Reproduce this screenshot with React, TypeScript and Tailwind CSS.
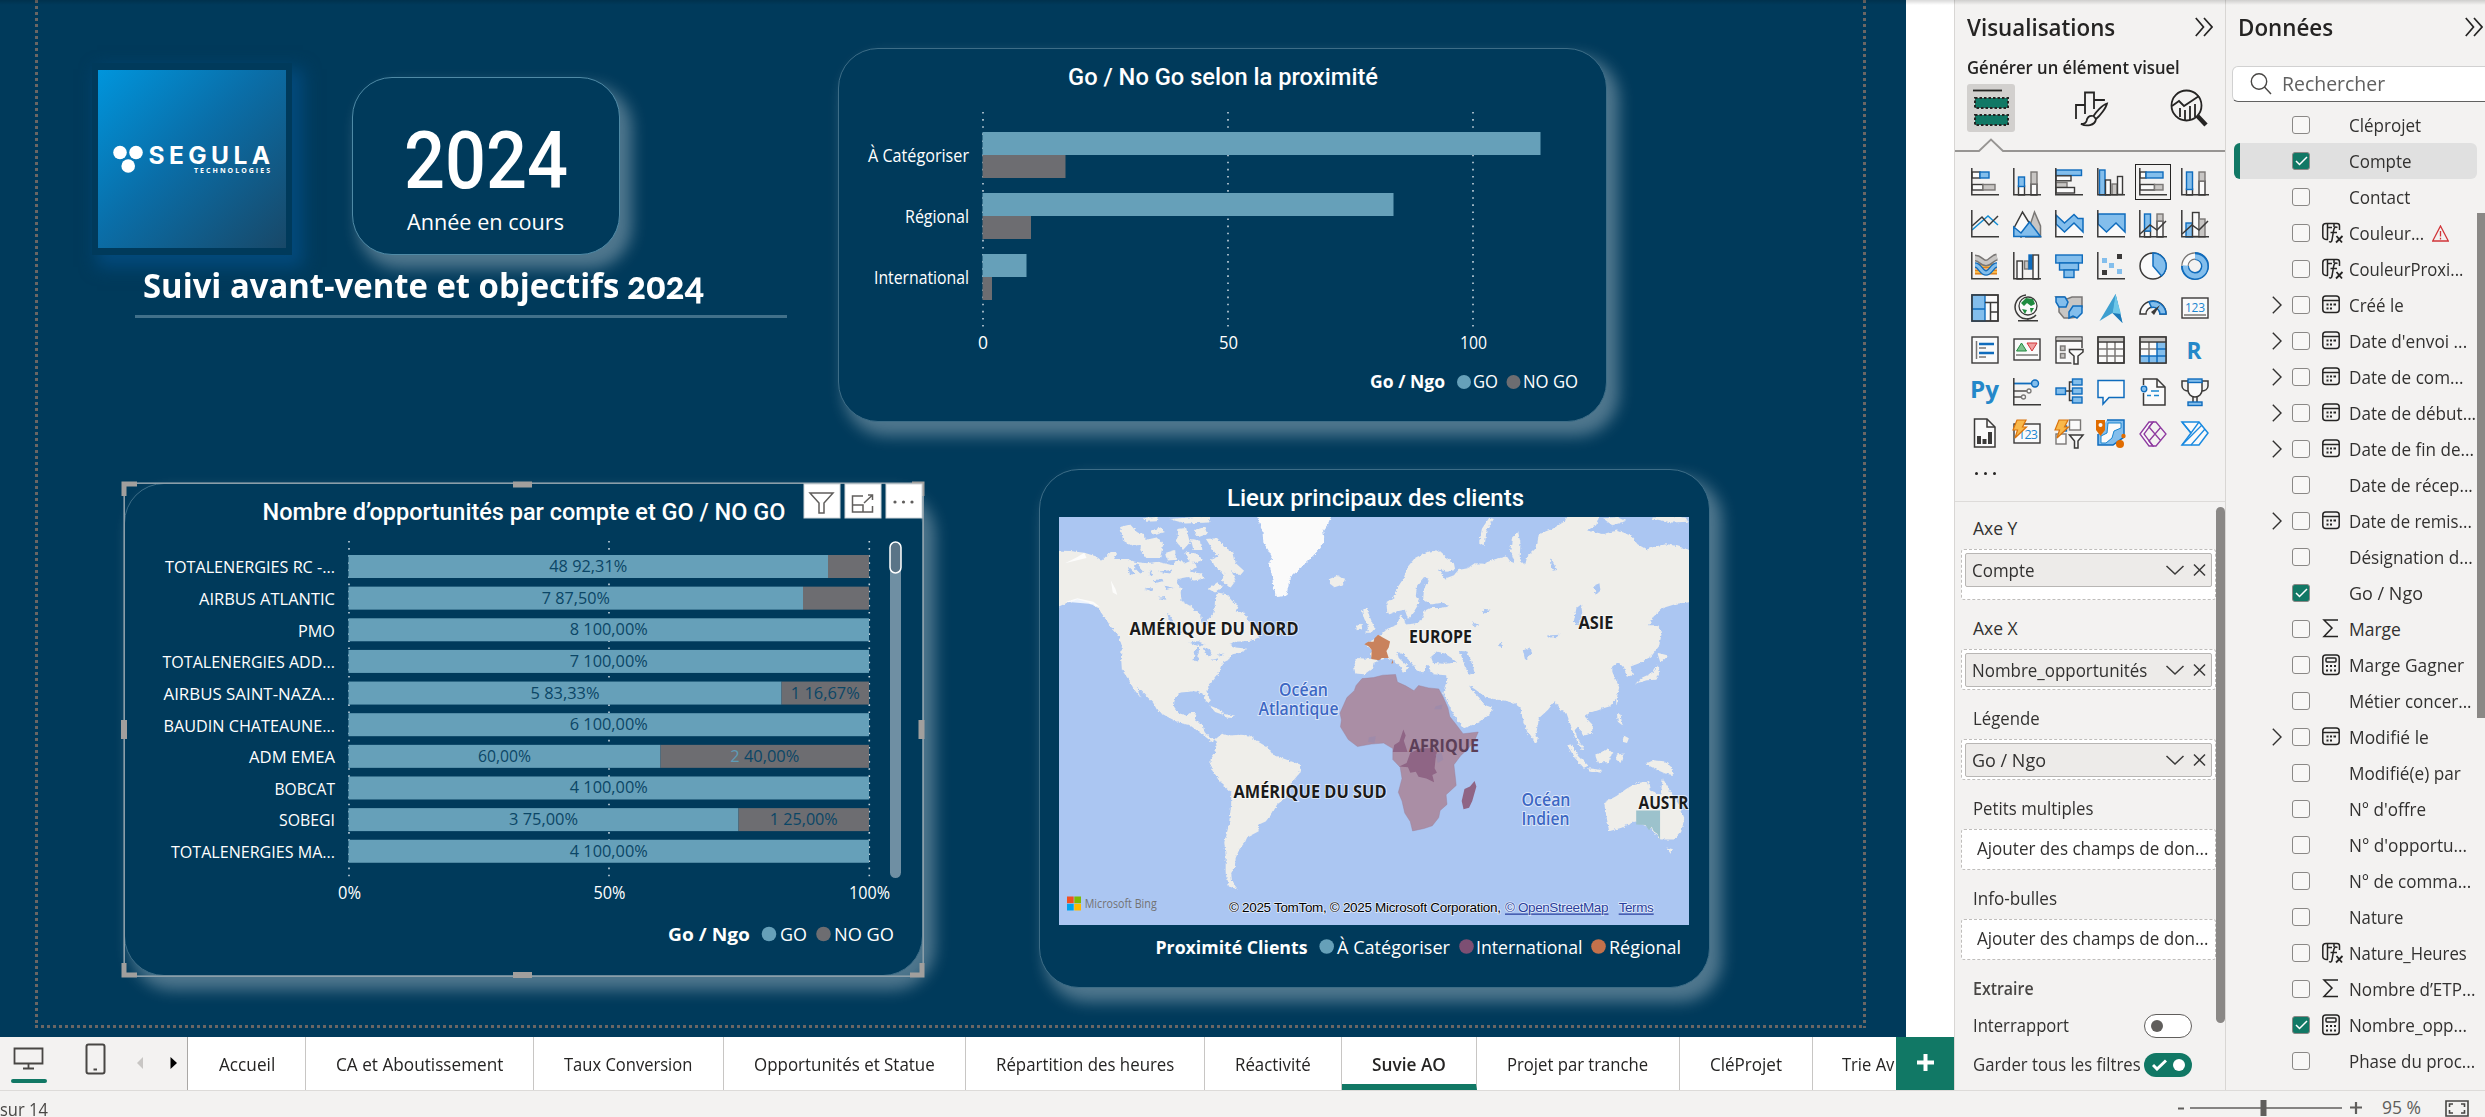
import { useLayoutEffect, useRef, useState } from "react";
import type { ReactNode } from "react";

/* Sets a line of text to an exact width. */
function Fit({ w, children, className = "" }: { w: number; children: ReactNode; className?: string }) {
  const ref = useRef<HTMLSpanElement>(null);
  const [s, setS] = useState(1);
  useLayoutEffect(() => {
    if (ref.current) setS(w / ref.current.offsetWidth);
  }, [w]);
  return (
    <span className={`inline-block shrink-0 whitespace-nowrap ${className}`} style={{ width: w }}>
      <span ref={ref} className="inline-block origin-left whitespace-nowrap" style={{ transform: `scaleX(${s})` }}>
        {children}
      </span>
    </span>
  );
}

type TProps = { x: number; y: number; w?: number; s?: number; f?: string; c?: string; children: ReactNode };
const SANS = "'Open Sans','Noto Sans',sans-serif";
const DIN = "Roboto,sans-serif";

/* Chart text: x is the left edge, y the baseline. */
function T({ x, y, w, s = 17.3, f = "#fff", c = "", children }: TProps) {
  return (
    <text x={x} y={y} fontSize={s} fill={f} className={c} fontFamily={SANS} textLength={w} lengthAdjust="spacingAndGlyphs">
      {children}
    </text>
  );
}

const GO = "#66a0b9";
const NOGO = "#6d6d71";

function Grid({ xs, y1, y2 }: { xs: number[]; y1: number; y2: number }) {
  return (
    <>
      {xs.map((x) => (
        <line key={x} x1={x} x2={x} y1={y1} y2={y2} stroke="#c4d3dc" strokeWidth="1.6" strokeDasharray="1.6 5.5" />
      ))}
    </>
  );
}

const cardBase =
  "absolute rounded-[40px] border border-[#3d6d87] bg-[#003a5b] shadow-[9px_11px_15px_3px_rgba(255,255,255,0.31)]";

function Logo() {
  return (
    <div className="absolute left-[92px] top-[63px] h-[192px] w-[200px] bg-[#003a5b] p-[7px_6px] shadow-[8px_9px_16px_3px_#034a7c]">
      <div className="h-full w-full bg-[linear-gradient(135deg,#0095dc_0%,#0a6ea8_45%,#184868_100%)]">
        <svg viewBox="98 70 188 178" className="h-full w-full" fill="#fff">
          <circle cx="120" cy="152.5" r="6.8" />
          <circle cx="136" cy="152.5" r="6.8" />
          <circle cx="128.2" cy="166" r="6.8" />
          <text x="148.5" y="164" fontSize="24.5" fontWeight="700" fontFamily="Inter,sans-serif" textLength="121.5" lengthAdjust="spacing">
            SEGULA
          </text>
          <text x="194" y="172.8" fontSize="7" fontWeight="700" fontFamily={SANS} textLength="76" lengthAdjust="spacing">
            TECHNOLOGIES
          </text>
        </svg>
      </div>
    </div>
  );
}

function YearCard() {
  return (
    <div className={`${cardBase} left-[352px] top-[77px] h-[178px] w-[268px] border-[#4f8aa6]`}>
      <svg width="266" height="176" viewBox="353 78 266 176">
        <text x="404" y="188" fontSize="79" fontWeight="500" fontFamily={DIN} fill="#fff" textLength="164" lengthAdjust="spacingAndGlyphs">
          2024
        </text>
        <T x={407} y={229.5} w={157} s={21}>
          Année en cours
        </T>
      </svg>
    </div>
  );
}

function ProximityCard() {
  const rows = [
    { l: "À Catégoriser", x: 868, w: 101, y: 132, a: 558, b: 83 },
    { l: "Régional", x: 905, w: 64, y: 193, a: 411, b: 48.5 },
    { l: "International", x: 874, w: 95, y: 254, a: 44, b: 9.5 },
  ];
  return (
    <div className={`${cardBase} left-[838px] top-[48px] h-[374px] w-[769px]`}>
      <svg width="767" height="372" viewBox="839 49 767 372">
        <text x="1068" y="84.5" fontSize="23.5" fontWeight="500" fontFamily={DIN} fill="#fff" textLength="310" lengthAdjust="spacingAndGlyphs">
          Go / No Go selon la proximité
        </text>
        <Grid xs={[983, 1228, 1473]} y1={112} y2={329} />
        {rows.map((r) => (
          <g key={r.l}>
            <T x={r.x} y={r.y + 30} w={r.w}>
              {r.l}
            </T>
            <rect x="982.5" y={r.y} width={r.a} height="23" fill={GO} />
            <rect x="982.5" y={r.y + 23} width={r.b} height="23" fill={NOGO} />
          </g>
        ))}
        <T x={978} y={348.7} w={10}>0</T>
        <T x={1219} y={348.7} w={19}>50</T>
        <T x={1460} y={348.7} w={27}>100</T>
        <T x={1370} y={388} w={75} c="font-bold">Go / Ngo</T>
        <circle cx="1464" cy="382" r="7" fill={GO} />
        <T x={1473} y={388} w={25}>GO</T>
        <circle cx="1513.5" cy="382" r="7" fill={NOGO} />
        <T x={1523} y={388} w={55}>NO GO</T>
      </svg>
    </div>
  );
}

type Row = { l: string; x: number; split: number; a: string; aw: number; b?: string; bw?: number };
const accounts: Row[] = [
  { l: "TOTALENERGIES RC -...", x: 165, split: 828, a: "48 92,31%", aw: 78 },
  { l: "AIRBUS ATLANTIC", x: 199, split: 803, a: "7 87,50%", aw: 68 },
  { l: "PMO", x: 298, split: 869, a: "8 100,00%", aw: 78 },
  { l: "TOTALENERGIES ADD...", x: 162.5, split: 869, a: "7 100,00%", aw: 78 },
  { l: "AIRBUS SAINT-NAZA...", x: 163.5, split: 781.5, a: "5 83,33%", aw: 69, b: "1 16,67%", bw: 69 },
  { l: "BAUDIN CHATEAUNE...", x: 163.5, split: 869, a: "6 100,00%", aw: 78 },
  { l: "ADM EMEA", x: 249, split: 660.5, a: "60,00%", aw: 53, b: "2 40,00%", bw: 69 },
  { l: "BOBCAT", x: 274.5, split: 869, a: "4 100,00%", aw: 78 },
  { l: "SOBEGI", x: 279, split: 738.5, a: "3 75,00%", aw: 69, b: "1 25,00%", bw: 68 },
  { l: "TOTALENERGIES MA...", x: 171, split: 869, a: "4 100,00%", aw: 78 },
];

function AccountsCard() {
  const ink = "#0b4666";
  return (
    <div className={`${cardBase} left-[124px] top-[483px] h-[493px] w-[799px]`}>
      <svg width="797" height="491" viewBox="125 484 797 491" className="overflow-visible">
        <text x="262.5" y="520" fontSize="23.5" fontWeight="500" fontFamily={DIN} fill="#fff" textLength="523" lengthAdjust="spacingAndGlyphs">
          Nombre d’opportunités par compte et GO / NO GO
        </text>
        <Grid xs={[349, 609, 869.3]} y1={541} y2={880} />
        {accounts.map((r, i) => {
          const y = 555 + i * 31.64;
          return (
            <g key={r.l}>
              <T x={r.x} y={y + 18.3} w={335 - r.x} s={17}>
                {r.l}
              </T>
              <rect x="348.5" y={y} width={r.split - 348.5} height="23" fill={GO} />
              {r.split < 869 && <rect x={r.split} y={y} width={869 - r.split} height="23" fill={NOGO} />}
              <T x={(348.5 + r.split) / 2 - r.aw / 2} y={y + 17} w={r.aw} s={16} f={ink}>
                {r.a}
              </T>
              {r.b && r.bw && (
                <T x={(869 + r.split) / 2 - r.bw / 2} y={y + 17} w={r.bw} s={16} f={ink}>
                  <tspan fill={r.l === "ADM EMEA" ? "#5f9cb7" : ink}>{r.b.slice(0, 1)}</tspan>
                  {r.b.slice(1)}
                </T>
              )}
            </g>
          );
        })}
        <T x={338} y={899} w={23}>0%</T>
        <T x={593.5} y={899} w={32}>50%</T>
        <T x={849} y={899} w={41}>100%</T>
        <T x={668} y={941} w={82} s={18.5} c="font-bold">Go / Ngo</T>
        <circle cx="769" cy="934" r="7.3" fill={GO} />
        <T x={780} y={941} w={27} s={18.5}>GO</T>
        <circle cx="823.5" cy="934" r="7.3" fill={NOGO} />
        <T x={834} y={941} w={60} s={18.5}>NO GO</T>
        <rect x="890" y="542" width="11" height="336" rx="5.5" fill="#6f8fa3" />
        <rect x="890" y="542" width="11" height="31" rx="5.5" fill="#5a7487" stroke="#fff" strokeWidth="1.5" />

        {/* selection frame and resize handles */}
        <rect x="124.2" y="483.2" width="799" height="493" fill="none" stroke="#8b9ea9" strokeWidth="1.6" />
        <g fill="none" stroke="#a19f9d" strokeWidth="5">
          <path d="M124 496V484H137M912 484H922V496M124 963V975H137M910 975H922V963" />
          <path d="M513 484.5H532M513 975H532M124 720V739M921.5 720V739" strokeWidth="6" />
        </g>
        {[804, 845, 886].map((x) => (
          <rect key={x} x={x} y="484" width="36" height="34" fill="#fff" stroke="#cfd6da" strokeWidth="1" />
        ))}
        <g fill="none" stroke="#605e5c" strokeWidth="1.5">
          <path d="M810 493H833L824 503V513H819V503Z" />
          <path d="M863 496H852.500V512H872.500V506M852.500 505H863V512M868 495H872.500V500M864 503L872 495.500" />
        </g>
        <g fill="#605e5c">
          <circle cx="895" cy="502" r="1.6" />
          <circle cx="903.500" cy="502" r="1.6" />
          <circle cx="912" cy="502" r="1.6" />
        </g>
      </svg>
    </div>
  );
}

function MapShapes() {
  return (
    <svg width="630" height="408" viewBox="85 166 1372 1184" preserveAspectRatio="none">
      <defs>
        <filter id="coast" x="0" y="0" width="100%" height="100%">
          <feTurbulence type="fractalNoise" baseFrequency="0.13" numOctaves="3" seed="4" />
          <feDisplacementMap in="SourceGraphic" scale="9" xChannelSelector="R" yChannelSelector="G" />
        </filter>
      </defs>
      <rect x="85" y="166" width="1372" height="1184" fill="#abc6f2" />
      <g fill="#efeeea" filter="url(#coast)">
        <path d="M60,262L110,265 140,270 165,280 178,292 200,265 212,268 205,288 235,288 250,296 275,300 300,296 330,305 345,290 360,300 372,292 385,310 370,325 395,330 400,345 380,350 365,340 345,345 340,360 352,370 350,385 352,410 372,425 385,440 395,455 398,478 408,480 410,462 420,450 424,430 425,400 430,385 450,390 462,410 475,420 470,440 490,445 500,470 518,495 520,515 505,525 470,528 455,535 470,545 495,548 480,560 460,565 455,580 440,590 435,610 430,625 415,650 408,665 412,690 414,708 405,700 400,680 380,672 350,675 338,690 335,715 345,735 362,742 370,735 383,735 380,755 398,770 402,790 412,805 425,812 418,818 405,805 385,785 370,770 345,762 320,745 300,730 290,705 265,672 255,660 262,690 275,715 262,690 248,665 235,635 222,610 220,570 222,540 215,510 195,480 180,450 170,430 150,415 125,405 108,412 60,440Z" />
        <path d="M425,812L440,795 455,800 480,798 500,800 515,815 540,835 550,855 590,875 612,885 608,910 590,940 585,965 580,980 560,1000 550,1025 535,1050 518,1060 520,1078 495,1095 490,1110 478,1130 470,1155 468,1180 460,1200 462,1225 475,1247 455,1238 448,1200 448,1150 445,1110 455,1060 460,1000 460,965 435,935 415,890 415,870 425,850 428,830Z" />
        <path fill="#fafafa" d="M512,150L682,150 672,185 660,205 664,235 650,262 630,290 605,322 588,342 580,395 560,398 552,370 548,330 543,300 548,280 540,260 530,240 528,205Z" />
        <path d="M675,345L690,337 708,345 703,362 685,370 675,360Z" />
        <path d="M218,195L240,188 255,210 270,215 272,245 245,250 225,235ZM265,235L300,225 312,245 305,285 275,285 262,262ZM285,205L310,195 315,210 292,218ZM345,200L362,198 370,240 355,262 342,240ZM325,172L380,166 415,160 412,182 360,185ZM378,205L402,195 408,215 388,225ZM405,230L430,228 448,255 465,270 470,300 488,322 480,335 460,322 470,350 458,372 440,352 445,330 425,310 415,290 432,280 420,262ZM372,230L392,235 395,262 378,262ZM318,270L338,262 340,290 322,292ZM270,168L300,166 298,178 275,180ZM360,268L385,272 398,290 380,300 365,290ZM410,375L430,355 442,370 425,385Z" />
        <path d="M800,445L798,415 815,400 820,375 835,345 845,310 860,285 885,268 910,262 925,280 945,300 948,320 930,325 912,318 925,345 945,335 955,320 975,315 990,300 1010,302 1030,290 1060,280 1068,295 1078,300 1068,260 1072,225 1085,210 1090,240 1088,290 1100,305 1105,280 1125,255 1130,215 1160,200 1185,180 1200,150 1265,150 1255,190 1235,205 1270,215 1300,205 1330,220 1345,245 1365,260 1385,250 1410,245 1430,250 1480,270 1480,410 1430,418 1400,430 1380,455 1370,480 1390,480 1398,500 1392,540 1375,570 1350,590 1330,600 1335,625 1322,630 1315,600 1300,590 1290,600 1290,615 1305,660 1300,690 1285,715 1260,725 1240,735 1230,745 1248,770 1245,795 1228,800 1215,775 1208,785 1215,810 1228,840 1222,838 1205,795 1197,760 1190,735 1175,725 1165,700 1150,725 1130,750 1125,790 1115,810 1105,790 1095,755 1090,720 1075,705 1060,700 1035,695 1015,690 1005,680 990,665 978,655 985,670 1000,690 1010,710 1030,720 1022,740 1000,762 965,780 957,765 943,735 930,700 922,680 925,660 930,640 928,625 900,622 890,610 893,600 885,595 878,620 865,610 850,585 835,565 820,555 825,575 845,600 838,618 828,600 812,580 800,575 785,580 770,590 768,605 750,622 730,620 728,600 732,575 765,578 765,550 752,535 765,525 785,510 800,490 820,480 825,465 828,450 836,460 840,478 860,475 875,465 880,440 895,430 915,430 935,425 920,415 895,420 878,405 880,375 890,345 880,340 865,365 862,395 870,415 858,440 845,462 838,435 820,440 805,448Z" />
        <path d="M752,502L760,485 750,462 745,440 755,430 760,450 768,475 772,490 765,502ZM733,482L744,475 745,492 733,495Z" />
        <path d="M1000,240L1006,200 1022,168 1032,172 1016,205 1012,250ZM1375,170L1400,160 1450,168 1455,180 1420,182ZM1270,170L1300,166 1320,178 1290,190Z" />
        <path d="M1272,995L1300,975 1320,955 1340,940 1368,932 1372,960 1395,972 1400,925 1415,960 1435,1000 1447,1040 1440,1080 1425,1102 1395,1102 1375,1070 1340,1050 1310,1068 1283,1078Z" />
        <path d="M1408,1125L1422,1130 1417,1143ZM1362,882L1380,872 1402,875 1418,890 1422,915 1405,910 1388,900ZM1253,858L1280,838 1290,850 1282,878 1258,878ZM1192,828L1200,826 1218,860 1238,888 1228,894 1208,865ZM1237,895L1268,900 1265,908 1240,902ZM1300,735L1308,740 1312,770 1302,760ZM1315,800L1326,808 1322,822 1312,818ZM1300,855L1315,852 1308,880 1298,870ZM1388,595L1394,612 1386,638 1365,640 1340,650 1355,632 1378,618ZM1388,560L1412,568 1395,590ZM1298,690L1305,700 1299,712ZM412,712L440,728 442,740 425,732ZM445,738L468,742 462,749 447,748ZM1118,795L1128,805 1125,822 1118,815Z" />
      </g>
      <g fill="#abc6f2" filter="url(#coast)">
        <path d="M895,572L908,556 925,562 940,575 952,588 925,592 900,590ZM958,555L972,556 982,580 990,618 978,624 968,598ZM1212,430L1222,420 1225,450 1215,480 1206,470ZM1250,365L1262,358 1264,380 1254,392ZM1095,552L1112,545 1115,560 1100,580ZM1150,510L1175,508 1172,514 1152,516ZM368,532L385,526 402,534 392,542ZM382,548L390,545 388,585 378,582ZM400,545L415,552 418,568 408,570ZM415,582L432,576 430,584ZM430,566L445,562 442,570ZM255,300L270,325 262,330 248,312ZM290,350L310,345 312,352 294,358ZM345,490L355,500 350,508ZM1155,285L1170,320 1160,322ZM1008,432L1025,435 1010,448ZM985,470L1000,480 990,486Z" />
        <path d="M235,310L250,330 240,335ZM270,375L290,372 288,380ZM300,400L318,398 316,406ZM300,325L330,320 328,330ZM280,335L286,318 290,335ZM315,365L335,372 318,378ZM320,440L335,470 325,472ZM1040,540L1050,530 1052,545Z" />
      </g>
      <path d="M98,300L145,285 140,270 125,282ZM198,350L208,375 212,392 202,385ZM100,412L125,402 160,412 175,428 150,418Z" fill="#fff" opacity=".8" />
      <path
        d="M745,635L770,632 790,625 818,623 822,645 840,656 858,670 868,655 890,662 912,665 922,690 932,720 936,745 948,765 965,795 998,790 990,815 975,840 960,858 945,885 948,920 950,945 928,972 930,1000 915,1018 912,1038 898,1062 880,1070 855,1077 850,1050 838,1025 832,990 824,965 832,925 828,892 812,870 812,838 792,822 765,825 735,832 715,812 698,775 700,755 697,735 712,690 728,670 732,655Z"
        fill="#aa8ea5"
        stroke="#9a7b94"
        strokeWidth="1"
      />
      <path d="M835,783L840,800 836,815 844,848 812,848 815,828 826,818ZM850,850L872,838 898,836 908,848 905,868 903,895 908,908 898,915 902,936 885,925 868,920 862,905 850,908 845,892 826,890 842,880ZM990,932L994,948 985,990 978,1010 966,1014 962,990 968,955 980,948Z" fill="#8f6585" />
      <path d="M905,855L918,850 922,870 910,880ZM905,715L920,710 918,724 902,724ZM760,805L775,802 772,822 758,818Z" fill="#9a8aac" opacity=".7" />
      <path d="M780,508L790,516 806,527 803,545 798,555 803,575 788,575 782,582 765,578 766,552 760,542 750,535 758,528 770,528 772,518ZM811,580L813,590 809,592Z" fill="#c9825d" />
      <path d="M1342,1018H1394V1102L1388,1085 1380,1078 1376,1065 1370,1075 1362,1060 1342,1058Z" fill="#9cc2cc" />
    </svg>
  );
}

function MapCard() {
  const halo = "[paint-order:stroke] stroke-white/60 [stroke-width:2px]";
  return (
    <div className={`${cardBase} left-[1039px] top-[469px] flex h-[519px] w-[671px] flex-col pl-[19px] pt-[10px]`}>
      <svg width="630" height="37" viewBox="1059 480 630 37" className="overflow-visible">
        <text x="1227" y="506" fontSize="23.5" fontWeight="500" fontFamily={DIN} fill="#fff" textLength="297" lengthAdjust="spacingAndGlyphs">
          Lieux principaux des clients
        </text>
      </svg>
      <div className="relative h-[408px] w-[630px] overflow-hidden">
        <MapShapes />
        <svg width="630" height="408" className="absolute inset-0">
          <T x={70.500} y={118} w={169} f="#1b1b1b" c={`font-bold ${halo}`}>AMÉRIQUE DU NORD</T>
          <T x={350} y={126} w={63} f="#1b1b1b" c={`font-bold ${halo}`}>EUROPE</T>
          <T x={519.5} y={112} w={35} f="#1b1b1b" c={`font-bold ${halo}`}>ASIE</T>
          <T x={350} y={235} w={70} f="#5c3f57" c="font-bold">AFRIQUE</T>
          <T x={174.500} y={280.500} w={153} f="#1b1b1b" c={`font-bold ${halo}`}>AMÉRIQUE DU SUD</T>
          <T x={579.500} y={292} w={50} f="#1b1b1b" c={`font-bold ${halo}`}>AUSTR</T>
          <T x={220} y={178.500} w={49} f="#3d68c4" c={`font-semibold ${halo}`}>Océan</T>
          <T x={199.500} y={197.500} w={80} f="#3d68c4" c={`font-semibold ${halo}`}>Atlantique</T>
          <T x={462.500} y={288.500} w={49} f="#3d68c4" c={`font-semibold ${halo}`}>Océan</T>
          <T x={462.500} y={307.500} w={48} f="#3d68c4" c={`font-semibold ${halo}`}>Indien</T>
          <rect x="8" y="379.500" width="6.700" height="6.700" fill="#f25022" />
          <rect x="15.300" y="379.500" width="6.700" height="6.700" fill="#7fba00" />
          <rect x="8" y="386.800" width="6.700" height="6.700" fill="#00a4ef" />
          <rect x="15.300" y="386.800" width="6.700" height="6.700" fill="#ffb900" />
          <T x={25.700} y={391.300} w={72} s={13.500} f="#737373" c="font-medium">Microsoft Bing</T>
          <path d="M446 397.200H549.500M559.700 397.200H594.700" stroke="#2a3f9d" strokeWidth="1.200" />
          <g fontFamily="'Liberation Sans',sans-serif" fontSize="13.500" className="stroke-white/70 [paint-order:stroke] [stroke-width:1.500px]">
            <text x="170" y="395" textLength="272" fill="#000">© 2025 TomTom, © 2025 Microsoft Corporation,</text>
            <text x="446" y="395" textLength="103.500" fill="#2a3f9d">© OpenStreetMap</text>
            <text x="559.700" y="395" textLength="35" fill="#2a3f9d">Terms</text>
          </g>
        </svg>
      </div>
      <svg width="640" height="50" viewBox="1059 925 640 50">
        <T x={1155.500} y={953.500} w={152} s={18.500} c="font-bold">Proximité Clients</T>
        <circle cx="1326.700" cy="946.500" r="7.300" fill={GO} />
        <T x={1337} y={953.500} w={113} s={18.500}>À Catégoriser</T>
        <circle cx="1466.500" cy="946.500" r="7.300" fill="#7d4f73" />
        <T x={1476} y={953.500} w={106.500} s={18.500}>International</T>
        <circle cx="1598.500" cy="946.500" r="7.300" fill="#c4714b" />
        <T x={1609} y={953.500} w={72} s={18.500}>Régional</T>
      </svg>
    </div>
  );
}

function ReportCanvas() {
  return (
    <div className="flex h-[1037px] bg-white">
      <div className="relative h-full w-[1906px] overflow-hidden bg-[#003a5b]">
        <div className="absolute left-[35px] top-0 h-[1028px] w-[3px] bg-[repeating-linear-gradient(180deg,#6a6664_0_3px,transparent_3px_6px)]" />
        <div className="absolute left-[1863px] top-0 h-[1028px] w-[3px] bg-[repeating-linear-gradient(180deg,#6a6664_0_3px,transparent_3px_6px)]" />
        <div className="absolute left-[35px] top-[1025px] h-[3px] w-[1830px] bg-[repeating-linear-gradient(90deg,#6a6664_0_3px,transparent_3px_6px)]" />
        <Logo />
        <YearCard />
        <div className="absolute left-[143px] top-[260px] flex h-[50px] leading-[50px] text-white">
          <Fit w={476} className="text-[34px] font-bold">Suivi avant-vente et objectifs</Fit>
          <Fit w={77} className="ml-[8px] font-['Lato'] text-[37px] font-black oldstyle-nums">2024</Fit>
        </div>
        <div className="absolute left-[135px] top-[315px] h-[3px] w-[652px] bg-[#41708a]" />
        <ProximityCard />
        <AccountsCard />
        <MapCard />
      </div>
    </div>
  );
}

const tabs = [
  { t: "Accueil", b: 118, w: 56 },
  { t: "CA et Aboutissement", b: 227.5, w: 167 },
  { t: "Taux Conversion", b: 190, w: 128.5 },
  { t: "Opportunités et Statue", b: 242.5, w: 181 },
  { t: "Répartition des heures", b: 238.5, w: 178 },
  { t: "Réactivité", b: 137.5, w: 76 },
  { t: "Suvie AO", b: 134.5, w: 74 },
  { t: "Projet par tranche", b: 203.5, w: 141 },
  { t: "CléProjet", b: 133, w: 72 },
];

function TabBar() {
  return (
    <div className="flex h-[53px] bg-[#f3f2f1]">
      <div className="w-[187px] shrink-0">
        <svg width="187" height="53" viewBox="0 1037 187 53">
          <path d="M14.500 1048.500H42.500V1063.500H14.500ZM28.500 1063V1068M23 1068.500H34" fill="none" stroke="#484644" strokeWidth="1.800" />
          <rect x="11" y="1079" width="36" height="4" rx="2" fill="#117865" />
          <rect x="86.500" y="1044.500" width="18" height="29" rx="2" fill="none" stroke="#484644" strokeWidth="2" />
          <rect x="93.500" y="1068.500" width="3.500" height="2" fill="#484644" />
          <path d="M143 1057V1069L137 1063Z" fill="#c8c6c4" />
          <path d="M170.500 1057V1069L177 1063Z" fill="#000" />
        </svg>
      </div>
      <div className="flex w-[1709px] overflow-hidden border-l border-[#a9a7a5] bg-white text-[17.5px] leading-[54px] text-[#252423]">
        {tabs.map((t) => (
          <div
            key={t.t}
            style={{ width: t.b }}
            className={`flex shrink-0 justify-center border-r border-[#c8c6c4] ${t.t === "Suvie AO" ? "border-b-[6px] border-b-[#117865] font-semibold" : ""}`}
          >
            <Fit w={t.w}>{t.t}</Fit>
          </div>
        ))}
        <div className="shrink-0 pl-[29px]">
          <Fit w={52}>Trie Av</Fit>
        </div>
      </div>
      <div className="flex w-[58px] items-center justify-center bg-[#117865]">
        <svg width="17" height="17" viewBox="0 0 17 17" className="-mt-[2px]">
          <path d="M8.500 0V17M0 8.500H17" stroke="#fff" strokeWidth="4" />
        </svg>
      </div>
    </div>
  );
}

/* Visual gallery */
const D = "#3b3a39";
const B = "#0f6cbd";
const L = "#83beec";
const G = "#797775";
const S = "#c8c6c4";
const W = "#fafafa";
const R = ({ x, y, w, h, f = W, s = D }: { x: number; y: number; w: number; h: number; f?: string; s?: string }) => (
  <rect x={x} y={y} width={w} height={h} fill={f} stroke={s} strokeWidth="1.4" />
);
const P = ({ d, f = "none", s = D, k = 1.5 }: { d: string; f?: string; s?: string; k?: number }) => (
  <path d={d} fill={f} stroke={s} strokeWidth={k} />
);
const Axis = () => <P d="M.8 0V26.800H28" />;
const Bolt = () => <path d="M4 0H13L9.500 7H13.500L2 18L4.500 10H0Z" fill="#f9b84a" stroke="#d9730d" strokeWidth="1.200" />;
const Funnel = () => <P d="M14.500 15H28L23 21V28H19.500V21Z" f={W} />;

const gallery: ReactNode[] = [
  <><R x={1} y={4} w={8} h={6} /><R x={9} y={4} w={9} h={6} f={L} s={B} /><R x={1} y={16.5} w={11} h={5.5} /><R x={12} y={16.5} w={12} h={5.5} f={S} s={G} /><Axis /></>,
  <><R x={5.5} y={18} w={6} h={9} /><R x={5.5} y={9} w={6} h={9.5} f={L} s={B} /><R x={18} y={16} w={6} h={11} /><R x={18} y={4} w={6} h={12} f={S} s={G} /><Axis /></>,
  <><R x={1} y={2} w={25.5} h={5.5} f={L} s={B} /><R x={1} y={7.8} w={15} h={5} /><R x={1} y={14.5} w={11} h={5} f={S} s={G} /><R x={1} y={19.5} w={18.5} h={5.5} /><Axis /></>,
  <><R x={2.5} y={2} w={5.5} h={25} f={L} s={B} /><R x={8.5} y={12} w={5} h={15} /><R x={15} y={16} w={5} h={11} f={S} s={G} /><R x={20.5} y={8.5} w={5} h={18} /><Axis /></>,
  <><R x={1} y={4} w={6} h={6} /><R x={7} y={4} w={17} h={6} f={L} s={B} /><R x={1} y={16.5} w={14.5} h={5.5} /><R x={15.5} y={16.5} w={8.5} h={5.5} f={S} s={G} /><Axis /></>,
  <><R x={5.5} y={21} w={6} h={6} /><R x={5.5} y={4} w={6} h={17.5} f={L} s={B} /><R x={18} y={13} w={6} h={14} /><R x={18} y={4} w={6} h={9} f={S} s={G} /><Axis /></>,
  <><P d="M1 20L17 6L27 15" s="#118dd4" /><P d="M1 16L11 7L18 15L27 6" /><Axis /></>,
  <><P d="M13 27L21.500 2L27.500 16V27Z" f={S} s={G} /><P d="M1 18L9.500 2L20 19L8 27Z" f={W} /><P d="M.8 17L8 23L16.500 12L27.500 26.500H.8Z" f={L} s={B} /></>,
  <><path d="M1 26V14L9.500 22L19 13L28 22V26Z" fill={W} /><P d="M1 5L9.500 13L19 4.500L23 8.500H28V22L19 13L9.500 22L1 14Z" f={L} s={B} /><Axis /></>,
  <><path d="M1 26V14L9.500 22L19 13L28 22V26Z" fill={W} /><P d="M1 4H28V22L19 13L9.500 22L1 14Z" f={L} s={B} /><Axis /></>,
  <><R x={5.5} y={21} w={6} h={6} /><R x={5.5} y={4} w={6} h={17} f={L} s={B} /><R x={18} y={11} w={6} h={16} /><R x={18} y={4} w={6} h={7} f={S} s={G} /><P d="M1 24L11 15L18 20L27 11" /><Axis /></>,
  <><R x={5} y={13} w={6.5} h={14} f={L} s={B} /><R x={11.5} y={2.500} w={6.500} h={24} /><R x={18} y={9} w={6} h={18} f={S} s={G} /><P d="M1 24L11 15L18 20L27 11" /><Axis /></>,
  <><P d="M4 20H26M4 14H26" s="#d9730d" k={5} /><P d="M4 20H26M4 14H26" s="#f9b84a" k={2.5} /><P d="M4 6C9 6 11 11 15 11S21 6 26 5" s={G} k={7} /><P d="M4 6C9 6 11 11 15 11S21 6 26 5" s={S} k={4} /><P d="M4 13C9 13 10 21 15 21S21 13 26 13" s={B} k={5.500} /><P d="M4 13C9 13 10 21 15 21S21 13 26 13" s={L} k={3} /><Axis /></>,
  <><R x={4} y={9} w={5.500} h={18} /><R x={11.500} y={9} w={4} h={8} f={S} s={G} /><R x={16} y={3} w={3} h={14} f={B} s={B} /><R x={20} y={3} w={5.500} h={24} /><Axis /></>,
  <><R x={.8} y={3} w={26.5} h={8} f={L} s={B} /><R x={4.5} y={11} w={19} h={7} f={L} s={B} /><R x={9} y={18} w={10} h={7.500} f={L} s={B} /></>,
  <><rect x="20" y="2" width="5" height="5" fill={D} /><rect x="5" y="6" width="5" height="5" fill={L} /><rect x="12" y="11" width="5" height="5" fill={L} /><rect x="20" y="17" width="5" height="5" fill={L} /><rect x="5" y="18" width="5" height="5" fill={D} /><Axis /></>,
  <><circle cx="14" cy="14" r="13" fill={W} stroke={D} strokeWidth="1.500" /><P d="M14 1A13 13 0 0 1 22.500 24L14 14Z" f={L} s={B} /></>,
  <><circle cx="14" cy="14" r="10" fill="none" stroke={G} strokeWidth="7.500" /><circle cx="14" cy="14" r="10" fill="none" stroke={W} strokeWidth="5" /><path d="M14 4A10 10 0 1 1 4 14" fill="none" stroke={B} strokeWidth="8" /><path d="M14 4.700A9.700 9.700 0 1 1 4.500 13.500" fill="none" stroke={L} strokeWidth="5" /></>,
  <><R x={1} y={1} w={26} h={26} /><R x={1} y={1} w={13} h={26} f={L} s={B} /><P d="M1 15H14" s={B} /><P d="M14 8.500H27M19.500 8.500V27M19.500 18H27M1 1H27V27H1Z" /></>,
  <><circle cx="15" cy="12" r="9" fill={W} stroke={D} strokeWidth="1.300" /><path d="M13 4L20 5L22 10L18 12L14 9L11 12L8 9ZM9 15L14 16L12 20ZM17 14L21 14L18 19Z" fill="#1f8b3f" /><P d="M13 1A12 12 0 1 0 23 21M5 26.800H25M15 24V27" /></>,
  <><P d="M4 6L1 3H9L12 5L17 3H27V13L22 19V23L15 24L9 24L4 18Z" f={S} s={G} /><P d="M1 3H10L13 8L11 13H4L1 8Z" f={L} s={B} /><P d="M27 12V19L22 24L18 22L14 24V18L18 12Z" f={L} s={B} /></>,
  <><path d="M18.500 0L2.500 27L15.500 19L25.500 29Z" fill="#3d9fd0" /><path d="M18.500 0L25.500 29L15.500 19Z" fill="#1c78b8" /><path d="M18.500 0L15.500 19L24 20Z" fill="#6cc6e8" /></>,
  <><P d="M1 20A13 13 0 0 1 27 20H21A7 7 0 0 0 7 20Z" f={W} /><P d="M10 8A13 13 0 0 1 27 20H21A7 7 0 0 0 12.500 13.500Z" f={L} s={B} /><path d="M21 11L12 18L15 21Z" fill={D} /></>,
  <><R x={1} y={4} w={26} h={20} /><text x="4" y="18" fontSize="12" fill="#1a86d0" fontFamily={SANS} textLength="20">123</text><P d="M3 21H25" s={G} /></>,
  <><R x={1} y={1} w={26} h={26} /><P d="M5.500 5V23" s={G} /><P d="M8 8H23M8 17H23" s={B} k={2.600} /><P d="M8 12H15M8 21H15" s={G} /></>,
  <><R x={1} y={3} w={26} h={21} /><path d="M3.500 15L8.500 7L13.500 15Z" fill="#7fc28f" stroke="#1f8b3f" /><path d="M14 7H24L19 15Z" fill="#f0a0a0" stroke="#d13438" /><P d="M3 19H25" s={G} /></>,
  <><R x={1} y={1} w={26} h={26} /><rect x="1.500" y="1.500" width="25" height="3.500" fill={S} /><P d="M1 5H27" /><R x={5.500} y={10} w={4.500} h={4.500} f={S} s={G} /><R x={5.500} y={17.500} w={4.500} h={4.500} f={S} s={G} /><path d="M12 12H29V29H17Z" fill="#f3f2f1" /><P d="M14.500 13.500H28V16L23 20V28H19V20L14.500 16Z" f={W} /></>,
  <><R x={1} y={1} w={26} h={26} /><rect x="1.500" y="1.500" width="25" height="4" fill={S} /><P d="M10 6V27M18 6V27M1 13H27M1 20H27" s={G} /><P d="M1 6H27M1 1H27V27H1Z" /></>,
  <><R x={1} y={1} w={26} h={26} /><rect x="1.500" y="1.500" width="25" height="4" fill={S} /><path d="M18 6H27V27H1V20H18Z" fill={L} /><P d="M10 6V20M1 13H18" s={G} /><P d="M18 6V27M10 20V27M18 13H27M1 20H27" s={B} /><P d="M1 6H27M1 1H27V27H1Z" /></>,
  <text x="5.500" y="22.500" fontSize="24" fontWeight="700" fill="#2488c9" fontFamily={SANS} textLength="15" lengthAdjust="spacingAndGlyphs">R</text>,
  <text x="-1" y="20" fontSize="24" fontWeight="700" fill="#2488c9" fontFamily={SANS} textLength="29" lengthAdjust="spacingAndGlyphs">Py</text>,
  <><P d="M1 5.500H20" s={B} k={1.800} /><circle cx="22" cy="5.500" r="3.500" fill={L} stroke={B} strokeWidth="1.400" /><P d="M1 13H14M1 19H9" s={G} k={1.800} /><circle cx="16" cy="13" r="2" fill={W} stroke={G} strokeWidth="1.300" /><circle cx="10.500" cy="19" r="2" fill={W} stroke={G} strokeWidth="1.300" /><Axis /></>,
  <><P d="M10 13H17M18 4H14.500V22.500H18" /><R x={1} y={10} w={9.500} h={6.500} f={L} s={B} /><R x={17.500} y={1} w={9.500} h={6} f={L} s={B} /><R x={17.500} y={10} w={9.500} h={6} f={L} s={B} /><R x={17.500} y={19} w={9.500} h={6} f={L} s={B} /></>,
  <P d="M1 2.500H27V19.500H12L6 26V19.500H1Z" f={W} s={B} />,
  <><P d="M4.500 27V1H18L26 9V27Z" f={W} /><P d="M18 1V9H26" /><path d="M2 7H7V15H2Z" fill="#f3f2f1" /><circle cx="5" cy="11" r="2.800" fill={L} stroke={B} strokeWidth="1.300" /><P d="M12 13H20M8 17.500H12M15 17.500H20" s="#1a86d0" /></>,
  <><P d="M7 3H1V8C1 11 4 13 8 13M21 3H27V8C27 11 24 13 20 13" /><P d="M7 3H21V12C21 16 18 19 14 19S7 16 7 12Z" f={W} /><P d="M12 19V24M16 19V24" /><R x={7} y={1} w={14} h={3.500} f={L} s={B} /><R x={7} y={24} w={14} h={3.500} f={L} s={B} /></>,
  <><P d="M3.500 -1H16L24 7V27H3.500Z" f={W} /><P d="M16 -1V7H24" /><path d="M6 16H10V24H6ZM11.500 19H15.500V24H11.500ZM17 12H21V24H17Z" fill={D} /></>,
  <><R x={1} y={4} w={26} h={19} /><text x="5" y="19" fontSize="12.500" fill="#1a86d0" fontFamily={SANS} textLength="20">123</text><Bolt /></>,
  <><R x={1} y={14} w={10} h={10} s={G} /><R x={14.500} y={0} w={11} h={10} s={G} /><R x={6} y={6} w={5.500} h={5} f={L} s={B} /><Bolt /><path d="M13 13H29V29H18Z" fill="#f3f2f1" /><Funnel /></>,
  <><P d="M10 0H27V17L16 25H1V14" f={L} s={B} /><path d="M11 3H24V8L17 11L15 18L9 23H4V16L10 13Z" fill={W} stroke="#1a86d0" /><path d="M-1 0H8V10L3.500 16L-1 10Z" fill="#e06c00" /><circle cx="3.500" cy="5" r="2" fill={W} /><circle cx="23" cy="24" r="4" fill="#e06c00" /><circle cx="26.500" cy="16" r="2.200" fill="#e06c00" /></>,
  <><P d="M1 14L10 2H14L5 14L14 26H10Z" f={W} s="#8e3aa0" k={1.300} /><P d="M14 2H17L27 14L17 26H14L10 21L22 7M10 7L22 21M14 2L10 7L16 14L10 21" s="#8e3aa0" k={1.300} /></>,
  <><P d="M1 2H18L27 13L18 25H1L10 13Z" f={W} s="#1a8ae0" /><P d="M10 13L18 2M1 25L21 5M10 25L24 9M10 13L1 2" s="#1a8ae0" k={1.300} /></>,
];

function DoubleChevron() {
  return (
    <svg width="18" height="20" viewBox="0 0 18 20" fill="none" stroke="#252423" strokeWidth="1.700">
      <path d="M.8 1L8.500 10L.8 19M9 1L17 10L9 19" />
    </svg>
  );
}

function Well({ label, w, chip, cw, tall }: { label: string; w: number; chip?: string; cw?: number; tall?: boolean }) {
  return (
    <div className="pl-[6px]">
      <div className="h-[41px] pl-[12px] leading-[41px] ">
        <Fit w={w}>{label}</Fit>
      </div>
      <div
        className={`mb-[8px] w-[255px] rounded-[3px] border border-dashed border-[#c0bebc] bg-white p-[3px] ${tall ? "h-[51px]" : "h-[41px]"}`}
      >
        {chip ? (
          <div className="flex h-[34px] w-[247px] items-center rounded-[2px] border border-[#b8b6b4] bg-[#edebe9] pl-[6px] leading-[32px]">
            <Fit w={cw ?? 60}>{chip}</Fit>
            <svg width="42" height="14" viewBox="0 0 42 14" className="ml-auto mr-[4px]" fill="none" stroke="#3b3a39" strokeWidth="1.500">
              <path d="M1.500 3L10 11L18.500 3M29 1.500L40 12.500M40 1.500L29 12.500" />
            </svg>
          </div>
        ) : (
          <div className="pl-[12px] leading-[31px]">
            <Fit w={231}>Ajouter des champs de don...</Fit>
          </div>
        )}
      </div>
    </div>
  );
}

function VisualPane() {
  return (
    <div className="flex h-full w-[271px] shrink-0 flex-col border-l border-[#d8d6d4] bg-[#f3f2f1]">
      <div className="flex h-[54px] items-center justify-between pl-[12px] pr-[12px] text-[24px] font-semibold leading-[54px] text-[#252423]">
        <Fit w={148}>Visualisations</Fit>
        <DoubleChevron />
      </div>
      <div className="h-[30px] pl-[12px] text-[17.5px] font-semibold leading-[26px] text-[#252423]">
        <Fit w={213}>Générer un élément visuel</Fit>
      </div>
      <svg width="270" height="72" viewBox="1955 84 270 72" className="shrink-0">
        <rect x="1967" y="84" width="48" height="48" rx="3" fill="#d2d0ce" />
        <path d="M1973 90.500H2002" stroke="#252423" strokeWidth="1.800" />
        <path d="M1975 98H2008V108H1975ZM1975 115H2008V125H1975Z" fill="#117865" stroke="#252423" strokeWidth="2" strokeDasharray="2.500 2" />
        <g fill="none" stroke="#252423" strokeWidth="1.800">
          <path d="M2076 119V105H2085V92.500H2094V109M2085 105V114M2094 100H2104V101M2094 100V104" />
          <path d="M2107 103.500C2102 105 2096 112 2093.500 116L2096 119C2100 116 2106 108 2107 103.500ZM2093 116C2089 115 2087 118 2086.500 121C2086 123 2084 124 2081 124C2086 126.500 2095 126 2096 119" />
          <circle cx="2186.500" cy="105.500" r="15" />
          <path d="M2172 106L2179 101L2184 106L2199 96M2180 108V117M2185 110V120M2190 106V120M2195 104V117" />
          <path d="M2197.500 116L2206 125" strokeWidth="4.500" />
          <path d="M1955 151H1979L1991 139.500L2003 151H2225" stroke="#979593" />
        </g>
      </svg>
      <div className="grid h-[302px] shrink-0 grid-cols-[repeat(6,42px)] grid-rows-[repeat(7,42px)] pl-[12px] pt-[8px]">
        {gallery.map((g, i) => (
          <div key={i} className={`flex h-[36px] w-[36px] items-center justify-center ${i === 4 ? "border border-[#252423]" : ""}`}>
            <svg width="28" height="28" viewBox="0 0 28 28" className="shrink-0 overflow-visible">
              {g}
            </svg>
          </div>
        ))}
      </div>
      <div className="flex h-[44px] shrink-0 gap-[6px] border-b border-[#dddbd9] pl-[20px] pt-[14px]">
        <i className="h-[3px] w-[3px] rounded-full bg-[#252423]" />
        <i className="h-[3px] w-[3px] rounded-full bg-[#252423]" />
        <i className="h-[3px] w-[3px] rounded-full bg-[#252423]" />
      </div>
      <div className="flex min-h-0 flex-1 overflow-hidden text-[17.5px] text-[#323130]">
        <div className="w-[261px] shrink-0 pt-[6px]">
          <Well label="Axe Y" w={44} chip="Compte" cw={63} tall />
          <Well label="Axe X" w={45} chip="Nombre_opportunités" cw={175} />
          <Well label="Légende" w={67} chip="Go / Ngo" cw={74} />
          <Well label="Petits multiples" w={120} />
          <Well label="Info-bulles" w={84} />
          <div className="h-[40px] pl-[18px] font-semibold leading-[40px] text-[#484644]">
            <Fit w={61}>Extraire</Fit>
          </div>
          <div className="flex h-[35px] items-center justify-between pl-[18px] pr-[24px]">
            <Fit w={96}>Interrapport</Fit>
            <span className="flex h-[24px] w-[48px] items-center rounded-full border border-[#605e5c] bg-white pl-[6px]">
              <i className="h-[12px] w-[12px] rounded-full bg-[#605e5c]" />
            </span>
          </div>
          <div className="mt-[2px] flex h-[39px] items-center justify-between pl-[18px] pr-[24px]">
            <Fit w={168}>Garder tous les filtres</Fit>
            <span className="flex h-[24px] w-[48px] items-center justify-between rounded-full bg-[#117865] pl-[8px] pr-[7px]">
              <svg width="15" height="12" viewBox="0 0 15 12" fill="none" stroke="#fff" strokeWidth="3">
                <path d="M1 6L5 10L14 1.500" />
              </svg>
              <i className="h-[12px] w-[12px] rounded-full bg-white" />
            </span>
          </div>
        </div>
        <div className="mt-[5px] h-[516px] w-[9px] shrink-0 rounded-full bg-[#8a8886]" />
      </div>
    </div>
  );
}

type Field = { t: string; w: number; k?: "date" | "sum" | "calc" | "fx"; on?: boolean; warn?: boolean };
const fields: Field[] = [
  { t: "Cléprojet", w: 72 },
  { t: "Compte", w: 63, on: true },
  { t: "Contact", w: 61.5 },
  { t: "Couleur...", w: 75, k: "fx", warn: true },
  { t: "CouleurProxi...", w: 114.5, k: "fx" },
  { t: "Créé le", w: 55, k: "date" },
  { t: "Date d'envoi ...", w: 118, k: "date" },
  { t: "Date de com...", w: 114.5, k: "date" },
  { t: "Date de début...", w: 127, k: "date" },
  { t: "Date de fin de...", w: 125, k: "date" },
  { t: "Date de récep...", w: 124 },
  { t: "Date de remis...", w: 123, k: "date" },
  { t: "Désignation d...", w: 123.5 },
  { t: "Go / Ngo", w: 74, on: true },
  { t: "Marge", w: 52, k: "sum" },
  { t: "Marge Gagner", w: 115, k: "calc" },
  { t: "Métier concer...", w: 123 },
  { t: "Modifié le", w: 79.5, k: "date" },
  { t: "Modifié(e) par", w: 112 },
  { t: "N° d'offre", w: 77 },
  { t: "N° d'opportu...", w: 118 },
  { t: "N° de comma...", w: 122 },
  { t: "Nature", w: 54.5 },
  { t: "Nature_Heures", w: 117.5, k: "fx" },
  { t: "Nombre d’ETP...", w: 127, k: "sum" },
  { t: "Nombre_opp...", w: 118, k: "calc", on: true },
  { t: "Phase du proc...", w: 126 },
];

function FieldIcon({ k }: { k?: Field["k"] }) {
  return (
    <svg width="22" height="22" viewBox="0 0 22 22" fill="none" stroke="#252423" strokeWidth="1.500">
      {k === "date" && (
        <>
          <rect x=".8" y="2" width="16.400" height="16.400" rx="3" />
          <path d="M1 6.500H17" />
          <path d="M8 10.500H10M11.500 10.500H14M4.500 10.500H6.500M4.500 14.500H6.500M8 14.500H10" strokeWidth="2" />
        </>
      )}
      {k === "sum" && <path d="M16 2H2L10 10L2 18.500H16" />}
      {k === "calc" && (
        <>
          <rect x=".8" y="1" width="16.400" height="19.400" rx="3" />
          <rect x="4" y="4" width="10" height="4" rx="1" />
          <path d="M4 12H6M8 12H10M12 12H14M4 16.500H6M8 16.500H10M12 16.500H14" strokeWidth="2.200" />
        </>
      )}
      {k === "fx" && (
        <>
          <path d="M6 17.500H4C2 17.500 .8 16 .8 14.500V4.500C.8 3 2 1.500 4 1.500H15C16.500 1.500 17.500 2.500 17.500 4V8M5.500 1.500V17.500M5.500 5.500H10M12 1.500V5" />
          <path d="M15.500 5.500C12.500 4 12 6.500 11.500 9L10 18C9.600 20 8.500 20.500 7 19.500M8.500 10.500H15" />
          <path d="M14.500 14L20 20.500M20.500 14L14 20.500" strokeWidth="1.800" />
        </>
      )}
    </svg>
  );
}

function DataPane() {
  return (
    <div className="flex h-full min-w-0 flex-1 flex-col overflow-hidden border-l border-[#d8d6d4] bg-[#f3f2f1]">
      <div className="flex h-[54px] shrink-0 items-center justify-between pl-[12px] pr-[2px] text-[24px] font-semibold leading-[54px] text-[#252423]">
        <Fit w={95}>Données</Fit>
        <DoubleChevron />
      </div>
      <div className="ml-[6px] mt-[12px] flex h-[36px] w-[270px] shrink-0 items-center rounded-[6px] border border-[#d1d1d1] border-b-[#616161] bg-white pl-[17px] text-[20px] leading-[38px] text-[#616161]">
        <svg width="22" height="22" viewBox="0 0 22 22" className="mr-[10px]" fill="none" stroke="#484644" strokeWidth="1.400">
          <circle cx="9" cy="8.500" r="7.700" />
          <path d="M14.500 14L21 21" />
        </svg>
        <Fit w={103}>Rechercher</Fit>
      </div>
      <div className="flex min-h-0 flex-1 pt-[5px]">
        <div className="w-[251px] shrink-0 text-[17.5px] leading-[36px] text-[#323130]">
          {fields.map((f) => (
            <div key={f.t} className={`ml-[8px] flex h-[36px] w-[243px] items-center ${f.t === "Compte" ? "rounded-[6px] border-l-[6px] border-[#117865] bg-[#e0e0e0] pl-[24px]" : "pl-[30px]"}`}>
              <svg width="10" height="18" viewBox="0 0 10 18" className="mr-[10px] ml-[8px] shrink-0" fill="none" stroke="#323130" strokeWidth="1.400">
                {f.k === "date" && <path d="M.8 .8L9 9L.8 17.200" />}
              </svg>
              {f.on ? (
                <span className="flex h-[18px] w-[18px] shrink-0 items-center justify-center rounded-[3px] border border-[#8a8886] bg-[#117865]">
                  <svg width="13" height="10" viewBox="0 0 13 10" fill="none" stroke="#fff" strokeWidth="1.500">
                    <path d="M1 5L4.500 8.500L12 1" />
                  </svg>
                </span>
              ) : (
                <span className="h-[18px] w-[18px] shrink-0 rounded-[3px] border border-[#8a8886] bg-[#f8f7f6]" />
              )}
              <span className="ml-[12px] mr-[5px] h-[22px] w-[22px] shrink-0">
                <FieldIcon k={f.k} />
              </span>
              <Fit w={f.w}>{f.t}</Fit>
              {f.warn && (
                <svg width="17" height="17" viewBox="0 0 17 17" className="ml-[8px] shrink-0" fill="none" stroke="#d13438" strokeWidth="1.300">
                  <path d="M8.500 1L16.300 16H.7ZM8.500 6V11.500M8.500 12.800V14.500" />
                </svg>
              )}
            </div>
          ))}
        </div>
        <div className="mt-[106px] h-[505px] w-[8px] shrink-0 bg-[#8a8886]" />
      </div>
    </div>
  );
}

function StatusBar() {
  return (
    <div className="flex h-[27px] items-start justify-between overflow-hidden border-t border-[#dddbd9] bg-[#f3f2f1] text-[17.5px] text-[#484644]">
      <div className="leading-[36px]">
        <Fit w={48}>sur 14</Fit>
      </div>
      <div className="flex text-[#605e5c]">
        <svg width="190" height="26" viewBox="2175 1091 190 26" fill="none" stroke="#605e5c" strokeWidth="1.500">
          <path d="M2190 1108H2342" />
          <path d="M2178 1108.500H2184M2350 1107.500H2362M2356 1102V1114" strokeWidth="2.200" />
          <path d="M2263.500 1100V1116" strokeWidth="6" />
        </svg>
        <div className="ml-[17px] mr-[24px] leading-[32px]">
          <Fit w={39}>95 %</Fit>
        </div>
        <svg width="40" height="26" viewBox="2445 1091 40 26" fill="none" stroke="#484644" strokeWidth="1.600">
          <path d="M2446 1101H2468V1116H2446Z" />
          <path d="M2449.500 1107V1104H2453M2461 1104H2464.500V1107M2449.500 1110V1113H2453M2461 1113H2464.500V1110" />
        </svg>
      </div>
    </div>
  );
}

export default function App() {
  return (
    <div className="relative flex h-[1117px] w-full flex-col overflow-hidden bg-[#f3f2f1] font-['Open_Sans','Noto_Sans',sans-serif]">
      <div className="flex h-[1090px] shrink-0">
        <div className="w-[1954px] shrink-0">
          <ReportCanvas />
          <TabBar />
        </div>
        <VisualPane />
        <DataPane />
      </div>
      <StatusBar />
      <div className="pointer-events-none absolute inset-x-0 top-0 h-[5px] bg-gradient-to-b from-black/15 to-transparent" />
    </div>
  );
}
